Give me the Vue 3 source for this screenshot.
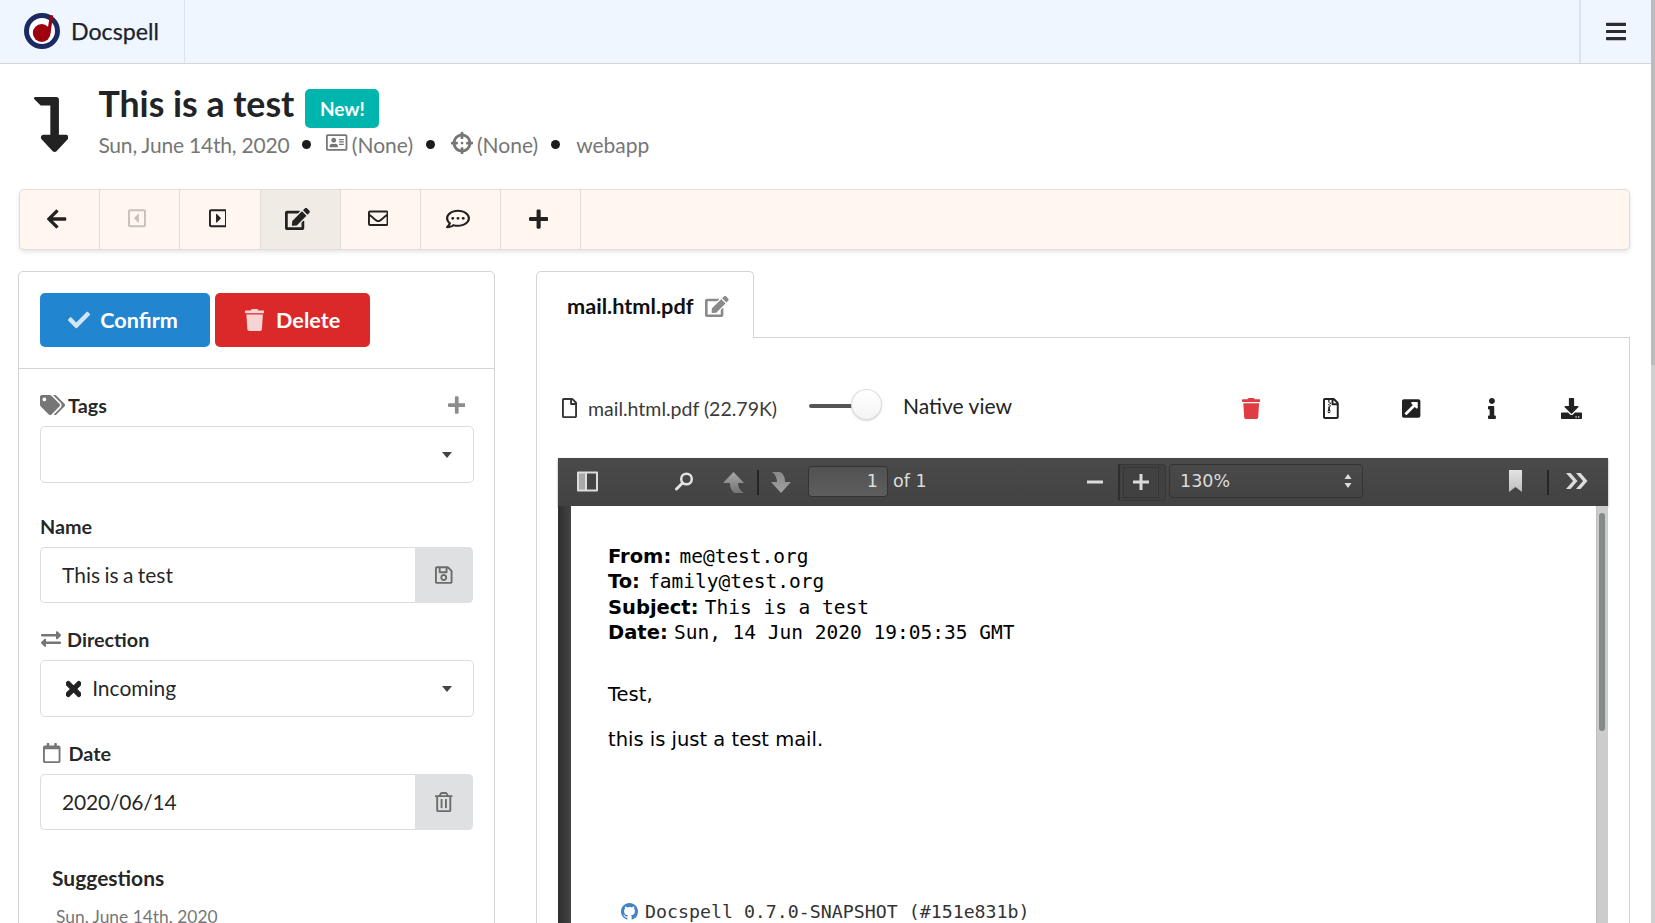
<script setup>
import { h } from 'vue'

const paths = {
  levelDown: [320, 'M313.553 392.331L209.587 504.334c-9.485 10.214-25.676 10.229-35.174 0L70.438 392.331C56.232 377.031 67.062 352 88.025 352H152V80H68.024a11.996 11.996 0 0 1-8.485-3.515l-56-56C-4.021 12.926 1.333 0 12.024 0H208c13.255 0 24 10.745 24 24v328h63.966c20.878 0 31.851 24.969 17.587 40.331z'],
  arrowLeft: [448, 'M257.5 445.1l-22.2 22.2c-9.4 9.4-24.6 9.4-33.9 0L7 273c-9.4-9.4-9.4-24.6 0-33.9L201.4 44.7c9.4-9.4 24.6-9.4 33.9 0l22.2 22.2c9.5 9.5 9.3 25-.4 34.3L136.6 216H424c13.3 0 24 10.7 24 24v32c0 13.3-10.7 24-24 24H136.6l120.5 114.8c9.8 9.3 10 24.8.4 34.3z'],
  plus: [448, 'M416 208H272V64c0-17.67-14.33-32-32-32h-32c-17.67 0-32 14.33-32 32v144H32c-17.67 0-32 14.33-32 32v32c0 17.67 14.33 32 32 32h144v144c0 17.67 14.33 32 32 32h32c17.67 0 32-14.33 32-32V304h144c17.67 0 32-14.33 32-32v-32c0-17.67-14.33-32-32-32z'],
  check: [512, 'M173.898 439.404l-166.4-166.4c-9.997-9.997-9.997-26.206 0-36.204l36.203-36.204c9.997-9.998 26.207-9.998 36.204 0L192 312.69 432.095 72.596c9.997-9.997 26.207-9.997 36.204 0l36.203 36.204c9.997 9.997 9.997 26.206 0 36.204l-294.4 294.401c-9.998 9.997-26.207 9.997-36.204-.001z'],
  trash: [448, 'M432 32H312l-9.4-18.7A24 24 0 0 0 281.1 0H166.8a23.72 23.72 0 0 0-21.4 13.3L136 32H16A16 16 0 0 0 0 48v32a16 16 0 0 0 16 16h416a16 16 0 0 0 16-16V48a16 16 0 0 0-16-16zM53.2 467a48 48 0 0 0 47.9 45h245.8a48 48 0 0 0 47.9-45L416 128H32z'],
  times: [352, 'M242.72 256l100.07-100.07c12.28-12.28 12.28-32.19 0-44.48l-22.24-22.24c-12.28-12.28-32.19-12.28-44.48 0L176 189.28 75.93 89.21c-12.28-12.28-32.19-12.28-44.48 0L9.21 111.45c-12.28 12.28-12.28 32.19 0 44.48L109.28 256 9.21 356.07c-12.28 12.28-12.28 32.19 0 44.48l22.24 22.24c12.28 12.28 32.2 12.28 44.48 0L176 322.72l100.07 100.07c12.28 12.28 32.2 12.28 44.48 0l22.24-22.24c12.28-12.28 12.28-32.19 0-44.48L242.72 256z'],
  bars: [448, 'M16 132h416c8.837 0 16-7.163 16-16V76c0-8.837-7.163-16-16-16H16C7.163 60 0 67.163 0 76v40c0 8.837 7.163 16 16 16zm0 160h416c8.837 0 16-7.163 16-16v-40c0-8.837-7.163-16-16-16H16c-8.837 0-16 7.163-16 16v40c0 8.837 7.163 16 16 16zm0 160h416c8.837 0 16-7.163 16-16v-40c0-8.837-7.163-16-16-16H16c-8.837 0-16 7.163-16 16v40c0 8.837 7.163 16 16 16z'],
  edit: [576, 'M402.6 83.2l90.2 90.2c3.8 3.8 3.8 10 0 13.8L274.4 405.6l-92.8 10.3c-12.4 1.4-22.9-9.1-21.5-21.5l10.3-92.8L388.8 83.2c3.8-3.8 10-3.8 13.8 0zm162-22.9l-48.8-48.8c-15.2-15.2-39.9-15.2-55.2 0l-35.4 35.4c-3.8 3.8-3.8 10 0 13.8l90.2 90.2c3.8 3.8 10 3.8 13.8 0l35.4-35.4c15.2-15.3 15.2-40 0-55.2zM384 346.2V448H64V128h229.8c3.2 0 6.2-1.3 8.5-3.5l40-40c7.6-7.6 2.2-20.5-8.5-20.5H48C21.5 64 0 85.5 0 112v352c0 26.5 21.5 48 48 48h352c26.5 0 48-21.5 48-48V306.2c0-10.7-12.9-16-20.5-8.5l-40 40c-2.2 2.3-3.5 5.3-3.5 8.5z'],
  envelope: [512, 'M464 64H48C21.49 64 0 85.49 0 112v288c0 26.51 21.49 48 48 48h416c26.51 0 48-21.49 48-48V112c0-26.51-21.49-48-48-48zm0 48v40.805c-22.422 18.259-58.168 46.651-134.587 106.49-16.841 13.247-50.201 45.072-73.413 44.701-23.208.375-56.579-31.459-73.413-44.701C106.18 199.465 70.425 171.067 48 152.805V112h416zM48 400V214.398c22.914 18.251 55.409 43.862 104.938 82.646 21.857 17.205 60.134 55.186 103.062 54.955 42.717.231 80.509-37.199 103.053-54.947 49.528-38.783 82.032-64.401 104.947-82.653V400H48z'],
  comment: [512, 'M144 208c-17.7 0-32 14.3-32 32s14.3 32 32 32 32-14.3 32-32-14.3-32-32-32zm112 0c-17.7 0-32 14.3-32 32s14.3 32 32 32 32-14.3 32-32-14.3-32-32-32zm112 0c-17.7 0-32 14.3-32 32s14.3 32 32 32 32-14.3 32-32-14.3-32-32-32zM256 32C114.6 32 0 125.1 0 240c0 47.6 19.9 91.2 52.9 126.3C38 405.7 7 439.1 6.5 439.5c-6.6 7-8.4 17.2-4.6 26S14.4 480 24 480c61.5 0 110-25.7 139.1-46.3C192 442.8 223.2 448 256 448c141.4 0 256-93.1 256-208S397.4 32 256 32zm0 368c-26.7 0-53.1-4.1-78.4-12.1l-22.7-7.2-19.5 13.8c-14.3 10.1-33.9 21.4-57.5 29 7.3-12.1 14.4-25.7 19.9-40.2l10.6-28.1-20.6-21.8C69.7 314.1 48 282.2 48 240c0-88.2 93.3-160 208-160s208 71.8 208 160-93.3 160-208 160z'],
  tags: [640, 'M497.941 225.941L286.059 14.059A48 48 0 0 0 252.118 0H48C21.49 0 0 21.49 0 48v204.118a48 48 0 0 0 14.059 33.941l211.882 211.882c18.744 18.745 49.136 18.746 67.882 0l204.118-204.118c18.745-18.745 18.745-49.137 0-67.882zM112 160c-26.51 0-48-21.49-48-48s21.49-48 48-48 48 21.49 48 48-21.49 48-48 48zm513.941 133.823L421.823 497.941c-18.745 18.745-49.137 18.745-67.882 0l-.36-.36L527.64 323.522c16.999-16.999 26.36-39.6 26.36-63.64s-9.362-46.641-26.36-63.64L331.397 0h48.721a48 48 0 0 1 33.941 14.059l211.882 211.882c18.745 18.745 18.745 49.137 0 67.882z'],
  exchange: [512, 'M0 168v-16c0-13.255 10.745-24 24-24h360V80c0-21.367 25.899-32.042 40.971-16.971l80 80c9.372 9.373 9.372 24.569 0 33.941l-80 80C409.956 271.982 384 261.456 384 240v-48H24c-13.255 0-24-10.745-24-24zm488 152H128v-48c0-21.314-25.862-32.08-40.971-16.971l-80 80c-9.372 9.373-9.372 24.569 0 33.941l80 80C102.057 463.997 128 453.437 128 432v-48h360c13.255 0 24-10.745 24-24v-16c0-13.255-10.745-24-24-24z'],
  calendar: [448, 'M400 64h-48V12c0-6.6-5.4-12-12-12h-40c-6.6 0-12 5.4-12 12v52H160V12c0-6.6-5.4-12-12-12h-40c-6.6 0-12 5.4-12 12v52H48C21.5 64 0 85.5 0 112v352c0 26.5 21.5 48 48 48h352c26.5 0 48-21.5 48-48V112c0-26.5-21.5-48-48-48zm-6 400H54c-3.3 0-6-2.7-6-6V160h352v298c0 3.3-2.7 6-6 6z'],
  save: [448, 'M433.941 129.941l-83.882-83.882A48 48 0 0 0 316.118 32H48C21.49 32 0 53.49 0 80v352c0 26.51 21.49 48 48 48h352c26.51 0 48-21.49 48-48V163.882a48 48 0 0 0-14.059-33.941zM272 80v80H144V80h128zm122 352H54a6 6 0 0 1-6-6V86a6 6 0 0 1 6-6h42v104c0 13.255 10.745 24 24 24h176c13.255 0 24-10.745 24-24V83.882l78.243 78.243a6 6 0 0 1 1.757 4.243V426a6 6 0 0 1-6 6zM224 232c-48.523 0-88 39.477-88 88s39.477 88 88 88 88-39.477 88-88-39.477-88-88-88zm0 128c-22.056 0-40-17.944-40-40s17.944-40 40-40 40 17.944 40 40-17.944 40-40 40z'],
  trashAlt: [448, 'M268 416h24a12 12 0 0 0 12-12V188a12 12 0 0 0-12-12h-24a12 12 0 0 0-12 12v216a12 12 0 0 0 12 12zM432 80h-82.41l-34-56.7A48 48 0 0 0 274.41 0H173.59a48 48 0 0 0-41.16 23.3L98.41 80H16A16 16 0 0 0 0 96v16a16 16 0 0 0 16 16h16v336a48 48 0 0 0 48 48h288a48 48 0 0 0 48-48V128h16a16 16 0 0 0 16-16V96a16 16 0 0 0-16-16zM171.84 50.91A6 6 0 0 1 177 48h94a6 6 0 0 1 5.15 2.91L293.61 80H154.39zM368 464H80V128h288zm-212-48h24a12 12 0 0 0 12-12V188a12 12 0 0 0-12-12h-24a12 12 0 0 0-12 12v216a12 12 0 0 0 12 12z'],
  file: [384, 'M369.9 97.9L286 14C277 5 264.8-.1 252.1-.1H48C21.5 0 0 21.5 0 48v416c0 26.5 21.5 48 48 48h288c26.5 0 48-21.5 48-48V131.9c0-12.7-5.1-25-14.1-34zM332.1 128H256V51.9l76.1 76.1zM48 464V48h160v104c0 13.3 10.7 24 24 24h104v288H48z'],
  fileZip: [384, 'M369.9 97.9L286 14C277 5 264.8-.1 252.1-.1H48C21.5 0 0 21.5 0 48v416c0 26.5 21.5 48 48 48h288c26.5 0 48-21.5 48-48V131.9c0-12.7-5.1-25-14.1-34zM332.1 128H256V51.9l76.1 76.1zM48 464V48h80v32h32V48h48v104c0 13.3 10.7 24 24 24h104v288H48zM128 80v32h32V80zm32 32v32h32v-32zm-32 32v32h32v-32zm32 32v32h32v-32zm-32 32v48l-14 72c-4 22 12 42 34 42s38-20 34-42l-14-72v-48zm19 108c12 0 21 6 21 14s-9 14-21 14-21-6-21-14 9-14 21-14z'],
  crosshairs: [512, 'M500 224h-30.364C455.724 130.325 381.675 56.276 288 42.364V12c0-6.627-5.373-12-12-12h-40c-6.627 0-12 5.373-12 12v30.364C130.325 56.276 56.276 130.325 42.364 224H12c-6.627 0-12 5.373-12 12v40c0 6.627 5.373 12 12 12h30.364C56.276 381.675 130.325 455.724 224 469.636V500c0 6.627 5.373 12 12 12h40c6.627 0 12-5.373 12-12v-30.364C381.675 455.724 455.724 381.675 469.636 288H500c6.627 0 12-5.373 12-12v-40c0-6.627-5.373-12-12-12zM288 404.634V364c0-6.627-5.373-12-12-12h-40c-6.627 0-12 5.373-12 12v40.634C165.826 392.232 119.783 346.243 107.366 288H148c6.627 0 12-5.373 12-12v-40c0-6.627-5.373-12-12-12h-40.634C119.768 165.826 165.757 119.783 224 107.366V148c0 6.627 5.373 12 12 12h40c6.627 0 12-5.373 12-12v-40.634C346.174 119.768 392.217 165.757 404.634 224H364c-6.627 0-12 5.373-12 12v40c0 6.627 5.373 12 12 12h40.634C392.232 346.174 346.243 392.217 288 404.634zM288 256c0 17.673-14.327 32-32 32s-32-14.327-32-32c0-17.673 14.327-32 32-32s32 14.327 32 32z'],
  card: [576, 'M528 32H48C21.5 32 0 53.5 0 80v352c0 26.5 21.5 48 48 48h480c26.5 0 48-21.5 48-48V80c0-26.5-21.5-48-48-48zm0 400H48V80h480v352zM208 256c35.3 0 64-28.7 64-64s-28.7-64-64-64-64 28.7-64 64 28.7 64 64 64zm-89.6 128h179.2c12.4 0 22.4-8.6 22.4-19.2v-19.2c0-31.8-30.1-57.6-67.2-57.6-10.8 0-18.7 8-44.8 8-26.9 0-33.4-8-44.8-8-37.1 0-67.2 25.8-67.2 57.6v19.2c0 10.6 10 19.2 22.4 19.2zM360 320h112c4.4 0 8-3.6 8-8v-16c0-4.4-3.6-8-8-8H360c-4.4 0-8 3.6-8 8v16c0 4.4 3.6 8 8 8zm0-64h112c4.4 0 8-3.6 8-8v-16c0-4.4-3.6-8-8-8H360c-4.4 0-8 3.6-8 8v16c0 4.4 3.6 8 8 8zm0-64h112c4.4 0 8-3.6 8-8v-16c0-4.4-3.6-8-8-8H360c-4.4 0-8 3.6-8 8v16c0 4.4 3.6 8 8 8z'],
  caretLeft: [448, 'M272 157.1v197.8c0 10.7-13 16.1-20.5 8.5l-98.3-98.9c-4.7-4.7-4.7-12.2 0-16.9l98.3-98.9c7.5-7.7 20.5-2.3 20.5 8.4zM448 80v352c0 26.5-21.5 48-48 48H48c-26.5 0-48-21.5-48-48V80c0-26.5 21.5-48 48-48h352c26.5 0 48 21.5 48 48zm-48 346V86c0-3.3-2.7-6-6-6H54c-3.3 0-6 2.7-6 6v340c0 3.3 2.7 6 6 6h340c3.3 0 6-2.7 6-6z'],
  caretRight: [448, 'M176 354.9V157.1c0-10.7 13-16.1 20.5-8.5l98.3 98.9c4.7 4.7 4.7 12.2 0 16.9l-98.3 98.9c-7.5 7.7-20.5 2.3-20.5-8.4zM448 80v352c0 26.5-21.5 48-48 48H48c-26.5 0-48-21.5-48-48V80c0-26.5 21.5-48 48-48h352c26.5 0 48 21.5 48 48zm-48 346V86c0-3.3-2.7-6-6-6H54c-3.3 0-6 2.7-6 6v340c0 3.3 2.7 6 6 6h340c3.3 0 6-2.7 6-6z'],
  external: [448, 'M448 80v352c0 26.51-21.49 48-48 48H48c-26.51 0-48-21.49-48-48V80c0-26.51 21.49-48 48-48h352c26.51 0 48 21.49 48 48zm-88 16H248.029c-21.313 0-32.08 25.861-16.971 40.971l31.984 31.987L67.515 364.485c-4.686 4.686-4.686 12.284 0 16.971l31.029 31.029c4.687 4.686 12.285 4.686 16.971 0l195.526-195.526 31.988 31.991C358.058 263.977 384 253.425 384 231.979V120c0-13.255-10.745-24-24-24z'],
  info: [192, 'M20 424.229h20V279.771H20c-11.046 0-20-8.954-20-20V212c0-11.046 8.954-20 20-20h112c11.046 0 20 8.954 20 20v212.229h20c11.046 0 20 8.954 20 20V492c0 11.046-8.954 20-20 20H20c-11.046 0-20-8.954-20-20v-47.771c0-11.046 8.954-20 20-20zM96 0C56.235 0 24 32.235 24 72s32.235 72 72 72 72-32.235 72-72S135.764 0 96 0z'],
  download: [512, 'M216 0h80c13.3 0 24 10.7 24 24v168h87.7c17.8 0 26.7 21.5 14.1 34.1L269.7 378.3c-7.5 7.5-19.8 7.5-27.3 0L90.1 226.1c-12.6-12.6-3.7-34.1 14.1-34.1H192V24c0-13.3 10.7-24 24-24zm296 376v112c0 13.3-10.7 24-24 24H24c-13.3 0-24-10.7-24-24V376c0-13.3 10.7-24 24-24h146.7l49 49c20.1 20.1 52.5 20.1 72.6 0l49-49H488c13.3 0 24 10.7 24 24zm-124 88c0-11-9-20-20-20s-20 9-20 20 9 20 20 20 20-9 20-20zm64 0c0-11-9-20-20-20s-20 9-20 20 9 20 20 20 20-9 20-20z']
}

const Ico = (props) => {
  const [w, d] = paths[props.n]
  return h('svg', { class: 'ico', viewBox: `0 0 ${w} 512`, 'aria-hidden': 'true' }, [h('path', { d, fill: 'currentColor' })])
}
Ico.props = ['n']

const menuItems = [
  { n: 'arrowLeft', size: 'big' },
  { n: 'caretLeft', disabled: true },
  { n: 'caretRight' },
  { n: 'edit', active: true, size: 'big' },
  { n: 'envelope' },
  { n: 'comment', size: 'wide' },
  { n: 'plus', size: 'big' }
]
</script>

<template>
  <div class="page">
    <header class="topbar">
      <div class="brand">
        <svg class="logo" viewBox="0 0 36 36">
          <circle cx="18" cy="18" r="15.500" fill="#fff" stroke="#1b2a62" stroke-width="5" />
          <circle cx="17.700" cy="20" r="8.900" fill="#9f0010" />
          <path d="M26 2 L29.200 2.600 L26.500 20 L23 20 Z" fill="#9f0010" />
        </svg>
        <span class="brand-name">Docspell</span>
      </div>
      <div class="burger"><Ico n="bars" class="i-bars" /></div>
    </header>

    <section class="title-row">
      <Ico n="levelDown" class="i-dir" />
      <div class="title-text">
        <div class="title-line">
          <h1>This is a test</h1>
          <span class="new">New!</span>
        </div>
        <div class="meta">
          <span class="date">Sun, June 14th, 2020</span>
          <i class="dot"></i>
          <span class="with-icon"><Ico n="card" class="i-meta-card" />(None)</span>
          <i class="dot"></i>
          <span class="with-icon"><Ico n="crosshairs" class="i-meta" />(None)</span>
          <i class="dot"></i>
          <span class="src">webapp</span>
        </div>
      </div>
    </section>

    <nav class="action-bar">
      <a
        v-for="m in menuItems"
        :key="m.n"
        class="act"
        :class="{ disabled: m.disabled, active: m.active }"
      ><Ico :n="m.n" class="i-act" :class="m.size" /></a>
    </nav>

    <main class="columns">
      <aside class="panel">
        <div class="panel-btns">
          <button class="btn blue"><Ico n="check" class="i-btn" />Confirm</button>
          <button class="btn red"><Ico n="trash" class="i-btn" />Delete</button>
        </div>
        <div class="panel-form">
          <div class="field tags-field">
            <label class="lbl lbl-split">
              <span class="lbl-main"><Ico n="tags" class="i-lbl i-tags" />Tags</span>
              <Ico n="plus" class="i-addtag" />
            </label>
            <div class="select empty"><i class="caret"></i></div>
          </div>
          <div class="field">
            <label class="lbl">Name</label>
            <div class="input-action">
              <span class="input-val words">This is a test</span>
              <span class="addon"><Ico n="save" class="i-addon" /></span>
            </div>
          </div>
          <div class="field">
            <label class="lbl"><Ico n="exchange" class="i-lbl" />Direction</label>
            <div class="select"><Ico n="times" class="i-x" /><span class="sel-val">Incoming</span><i class="caret"></i></div>
          </div>
          <div class="field">
            <label class="lbl"><Ico n="calendar" class="i-lbl i-cal" />Date</label>
            <div class="input-action">
              <span class="input-val digits">2020/06/14</span>
              <span class="addon"><Ico n="trashAlt" class="i-addon" /></span>
            </div>
          </div>
          <div class="suggest">
            <h4>Suggestions</h4>
            <div class="sug-item">Sun, June 14th, 2020</div>
          </div>
        </div>
      </aside>

      <section class="viewer">
        <div class="tabs">
          <div class="tab">mail.html.pdf<Ico n="edit" class="i-tab" /></div>
          <div class="tab-fill"></div>
        </div>
        <div class="tab-body">
          <div class="file-row">
            <div class="file-info">
              <span class="file-name"><Ico n="file" class="i-file" />mail.html.pdf (22.79K)</span>
              <span class="toggle"><i class="track"></i><i class="knob"></i></span>
              <span class="native">Native view</span>
            </div>
            <div class="file-actions">
              <a class="fa red-ico"><Ico n="trash" /></a>
              <a class="fa"><Ico n="fileZip" /></a>
              <a class="fa"><Ico n="external" /></a>
              <a class="fa"><Ico n="info" /></a>
              <a class="fa"><Ico n="download" /></a>
            </div>
          </div>

          <div class="pdf">
            <div class="pdf-bar">
              <div class="pdf-left">
                <svg class="pi sidebar" viewBox="0 0 21 21"><path d="M0 1.500a1 1 0 0 1 1-1h19a1 1 0 0 1 1 1v18a1 1 0 0 1-1 1H1a1 1 0 0 1-1-1z" fill="#dcdcdc" /><path d="M2 2.500h6v16H2z" fill="#a8a8a8" /><path d="M10 2.500h9v16h-9z" fill="#444" /></svg>
                <svg class="pi search" viewBox="0 0 19 19"><circle cx="11.500" cy="7" r="5.300" fill="none" stroke="#e2e2e2" stroke-width="2.500" /><path d="M7.500 11L1.500 17" stroke="#e2e2e2" stroke-width="3" stroke-linecap="round" /></svg>
                <svg class="pi up" viewBox="0 0 21 21"><defs><linearGradient id="gu" x1="0" y1="0" x2="0" y2="1"><stop offset="0" stop-color="#a8a8a8" /><stop offset="1" stop-color="#747474" /></linearGradient></defs><path d="M10.500 0L21 11h-6c0 4 2 8 6 10h-9c-4-2-5-6-5-10H0z" fill="url(#gu)" /></svg>
                <i class="pdf-sep sep-nav"></i>
                <svg class="pi down" viewBox="0 0 20 21"><defs><linearGradient id="gd" x1="0" y1="0" x2="0" y2="1"><stop offset="0" stop-color="#888" /><stop offset="1" stop-color="#a0a0a0" /></linearGradient></defs><path d="M10 21L0 10h6C6 6 4 2 1 0h8c4 2 5 6 5 10h6z" fill="url(#gd)" /></svg>
                <span class="page-input">1</span>
                <span class="page-of">of 1</span>
              </div>
              <div class="pdf-mid">
                <span class="zoom-btn"><svg class="pi zi" viewBox="0 0 16 16"><path d="M0 6.500h16v3H0z" fill="#dcdcdc" /></svg></span>
                <span class="zoom-btn focus"><span class="focus-ring"><svg class="pi zi" viewBox="0 0 16 16"><path d="M0 6.500h16v3H0z M6.500 0h3v16h-3z" fill="#dcdcdc" /></svg></span></span>
                <span class="zoom-sel">130%<svg class="updown" viewBox="0 0 8 16"><path d="M4 1l3.500 5h-7z M4 15l3.500-5h-7z" fill="#dcdcdc" /></svg></span>
              </div>
              <div class="pdf-right">
                <svg class="pi bookmark" viewBox="0 0 13 22"><defs><linearGradient id="gb" x1="0" y1="0" x2="0" y2="1"><stop offset="0" stop-color="#e4e4e4" /><stop offset="1" stop-color="#bdbdbd" /></linearGradient></defs><path d="M0 0h13v22l-6.500-5L0 22z" fill="url(#gb)" /></svg>
                <i class="pdf-sep sep-end"></i>
                <svg class="pi more" viewBox="0 0 22 16"><path d="M0 0h4.500l7 8-7 8H0l7-8z M10 0h4.500l7 8-7 8H10l7-8z" fill="#dcdcdc" /></svg>
              </div>
            </div>
            <div class="pdf-body">
              <div class="pdf-side"></div>
              <div class="pdf-doc">
                <div class="mail-head">
                  <div><b>From:</b> <span class="shift">me@test.org</span></div>
                  <div><b>To:</b> <span class="shift">family@test.org</span></div>
                  <div><b>Subject:</b> <span>This is a test</span></div>
                  <div><b>Date:</b> <span>Sun, 14 Jun 2020 19:05:35 GMT</span></div>
                </div>
                <p class="mail-p first">Test,</p>
                <p class="mail-p">this is just a test mail.</p>
                <div class="mail-foot">
                  <svg class="gh" viewBox="0 0 16 16"><path fill="#4183c4" d="M8 0C3.580 0 0 3.580 0 8c0 3.540 2.290 6.530 5.470 7.590.4.070.55-.17.55-.38 0-.19-.01-.82-.01-1.490-2.010.37-2.530-.49-2.690-.94-.09-.23-.48-.94-.82-1.130-.28-.15-.68-.52-.01-.53.63-.01 1.080.58 1.230.82.72 1.210 1.870.87 2.330.66.07-.52.28-.87.51-1.070-1.780-.2-3.640-.89-3.640-3.950 0-.87.31-1.590.82-2.150-.08-.2-.36-1.020.08-2.120 0 0 .67-.21 2.200.82.64-.18 1.320-.27 2-.27.68 0 1.360.09 2 .27 1.530-1.040 2.200-.82 2.200-.82.44 1.100.16 1.920.08 2.120.51.56.82 1.270.82 2.150 0 3.070-1.870 3.750-3.650 3.950.29.25.54.73.54 1.480 0 1.070-.01 1.930-.01 2.200 0 .21.15.46.55.38A8.013 8.013 0 0016 8c0-4.420-3.580-8-8-8z" /></svg>
                  <span>Docspell 0.7.0-SNAPSHOT (#151e831b)</span>
                </div>
              </div>
              <div class="pdf-scroll"><i></i></div>
            </div>
          </div>
        </div>
      </section>
    </main>
    <div class="page-scroll"><i></i></div>
  </div>
</template>

<style>
html, body { margin: 0; padding: 0; height: 100%; overflow: hidden; background: #fff; }
</style>

<style scoped>
.page {
  position: relative;
  height: 923px;
  overflow: hidden;
  box-sizing: border-box;
  font-family: Lato, "Liberation Sans", sans-serif;
  font-size: 21px;
  color: rgba(0, 0, 0, 0.87);
  background: #fff;
}
.ico { display: inline-block; height: 1em; width: auto; flex: none; }

.topbar {
  height: 63px;
  box-sizing: content-box;
  background: #eff6ff;
  border-bottom: 1px solid #d4d6d9;
  display: flex;
  justify-content: space-between;
}
.brand {
  display: flex;
  align-items: center;
  width: 185px;
  box-sizing: border-box;
  padding-left: 24px;
  border-right: 1px solid #dde3ea;
}
.logo { width: 36px; height: 36px; margin-right: 11px; margin-top: -1px; }
.brand-name { font-size: 23.200px; font-weight: 400; color: #1d222b; -webkit-text-stroke: 0.25px #1d222b; padding-bottom: 2px; }
.burger {
  width: 72px;
  margin-right: 4px;
  border-left: 2px solid #dde3ea;
  box-sizing: border-box;
  display: flex;
  align-items: center;
  justify-content: center;
  color: #2c2c2c;
}
.i-bars { height: 23px; }

.title-row {
  display: flex;
  height: 125px;
  padding-left: 34px;
  box-sizing: border-box;
  padding-top: 17px;
}
.i-dir { height: 55px; margin-top: 16px; color: #222; }
.title-text { margin-left: 30px; }
.title-line { display: flex; align-items: center; height: 46px; }
h1 { margin: 0; font-size: 35.700px; font-weight: 700; color: #212326; line-height: 46px; }
.new {
  margin-left: 11px;
  margin-top: 9px;
  background: #00b5ad;
  color: #fff;
  font-weight: 700;
  font-size: 19px;
  border-radius: 5px;
  width: 74px;
  height: 39px;
  display: flex;
  align-items: center;
  justify-content: center;
}
.meta { display: flex; align-items: center; color: #767676; margin-top: 2px; height: 30px; }
.date { letter-spacing: -0.2px; }
.dot { width: 9px; height: 9px; background: #1b1c1d; border-radius: 50%; margin: 0 14px 0 13px; }
.with-icon { display: flex; align-items: center; }
.i-meta-card { height: 19px; margin-right: 4px; margin-top: -3px; margin-left: 1px; }
.i-meta { height: 22px; margin-right: 4px; margin-top: -3px; margin-left: 2px; }
.src { margin-left: 2px; }

.action-bar {
  margin: 0 25px 0 19px;
  height: 61px;
  box-sizing: border-box;
  background: #fff6f0;
  border: 1px solid #e5dcd6;
  border-radius: 5px;
  box-shadow: 0 2px 4px rgba(34, 36, 38, 0.12);
  display: flex;
}
.act {
  width: 80.200px;
  box-sizing: border-box;
  padding: 0 5px 2px 0;
  border-right: 1.500px solid #e3dad4;
  display: flex;
  align-items: center;
  justify-content: center;
  color: #222;
}
.act.disabled { color: #c6c1bd; }
.act.active { background: #f1ebe6; }
.i-act { height: 20.500px; }
.i-act.big { height: 22px; }
.i-act.wide { height: 24px; transform: scaleY(0.87); }

.columns {
  display: grid;
  grid-template-columns: 477px 1094px;
  column-gap: 41px;
  margin: 21px 0 0 18px;
}
.panel {
  border: 1px solid #d4d4d5;
  border-radius: 5px;
  background: #fff;
  height: 700px;
  box-sizing: border-box;
}
.panel-btns {
  padding: 21px;
  display: flex;
  gap: 5px;
  border-bottom: 1px solid #d4d4d5;
}
.btn {
  border: 0;
  border-radius: 5px;
  color: #fff;
  font-family: inherit;
  font-size: 21.600px;
  font-weight: 700;
  height: 54px;
  display: flex;
  align-items: center;
  justify-content: center;
  padding: 0 0 1px;
}
.blue { background: #2185d0; width: 170px; padding-right: 4px; }
.red { background: #db2828; width: 155px; }
.i-btn { height: 22px; margin-right: 10px; opacity: 0.8; }
.red .i-btn { margin-right: 12px; }

.panel-form { padding: 25px 20px 0 21px; }
.field { margin-bottom: 25px; }
.tags-field { margin-bottom: 32px; }
.lbl {
  display: flex;
  align-items: center;
  font-size: 19.800px;
  font-weight: 700;
  color: rgba(0, 0, 0, 0.87);
  height: 23px;
  box-sizing: border-box;
  padding-bottom: 2px;
  margin-bottom: 9px;
}
.lbl-split { justify-content: space-between; }
.lbl-main { display: flex; align-items: center; }
.i-lbl { height: 20px; color: #767676; margin-right: 6px; margin-left: 1px; }
.i-tags { margin-left: 0; margin-right: 3px; }
.i-cal { margin-left: 3px; margin-right: 8px; }
.i-addtag { height: 20px; color: #8c8c8c; margin-right: 9px; }

.select {
  height: 57px;
  box-sizing: border-box;
  border: 1px solid #dcdcdd;
  border-radius: 5px;
  display: flex;
  align-items: center;
  position: relative;
  padding-left: 25px;
}
.sel-val { padding-bottom: 2px; }
.caret {
  position: absolute;
  right: 21px;
  top: 50%;
  margin-top: -3px;
  border-left: 5.500px solid transparent;
  border-right: 5.500px solid transparent;
  border-top: 6px solid #444;
}
.i-x { height: 22px; color: #222; margin-right: 11px; stroke: currentColor; stroke-width: 30px; }

.input-action {
  height: 56px;
  box-sizing: border-box;
  border: 1px solid #dcdcdd;
  border-right: 0;
  border-radius: 5px;
  display: flex;
  align-items: center;
  justify-content: space-between;
  padding-left: 21px;
  width: 433px;
}
.input-val { padding-bottom: 2px; }
.words { word-spacing: -1px; }
.digits { letter-spacing: -0.2px; }
.addon {
  width: 58px;
  height: 56px;
  margin-top: -1px;
  margin-bottom: -1px;
  background: #dfe0e1;
  border-radius: 0 5px 5px 0;
  display: flex;
  align-items: center;
  justify-content: center;
  color: #6b6b6b;
}
.i-addon { height: 20px; }

.suggest { margin: 35px 0 0 12px; }
h4 { margin: 0; font-size: 21px; font-weight: 700; line-height: 26px; }
.sug-item { margin: 15px 0 0 4px; font-size: 17.400px; color: #767676; }

.tabs { display: flex; height: 67px; }
.tab {
  width: 218px;
  box-sizing: border-box;
  border: 1px solid #d4d4d5;
  border-bottom: 0;
  border-radius: 5px 5px 0 0;
  display: flex;
  align-items: center;
  padding-left: 30px;
  padding-top: 2px;
  font-size: 21.700px;
  font-weight: 700;
  color: #111;
  background: #fff;
}
.tab-fill { flex: 1; border-bottom: 1px solid #d4d4d5; }
.i-tab { height: 21px; margin-left: 12px; color: #8a8a8a; }
.tab-body {
  border: 1px solid #d4d4d5;
  border-top: 0;
  padding: 0 21px;
  height: 600px;
}
.file-row {
  height: 120px;
  display: flex;
  align-items: center;
  justify-content: space-between;
  padding-top: 16px;
  box-sizing: border-box;
}
.file-info { display: flex; align-items: center; margin-top: -2px; }
.file-name { display: flex; align-items: center; font-size: 19.500px; color: #3a3a3a; margin-top: 6px; }
.i-file { height: 20px; margin-right: 11px; margin-left: 4px; color: #333; }
.toggle { position: relative; width: 74px; height: 34px; margin-left: 32px; display: block; }
.track { position: absolute; left: 0; top: 16px; width: 50px; height: 3.500px; background: #555; border-radius: 2px; }
.knob {
  position: absolute;
  left: 42px;
  top: 1px;
  width: 31px;
  height: 31px;
  border-radius: 50%;
  background: linear-gradient(#fff, #f4f4f4);
  box-shadow: 0 1px 2px rgba(34, 36, 38, 0.15), 0 0 0 1px rgba(34, 36, 38, 0.15) inset;
}
.native { margin-left: 20px; color: #222; }
.file-actions { display: flex; gap: 0; margin-top: 4px; margin-right: -4px; }
.fa { width: 80.200px; display: flex; justify-content: center; font-size: 21px; color: #222; }
.red-ico { color: #e03c42; }

.pdf { width: 1050px; }
.pdf-bar {
  height: 48px;
  background: linear-gradient(#4a4a4a, #424242);
  box-shadow: 0 1px 2px rgba(0, 0, 0, 0.4);
  position: relative;
  display: flex;
  align-items: center;
  color: #dcdcdc;
  font-family: "DejaVu Sans", sans-serif;
}
.pi { display: block; }
.pdf-left { display: flex; align-items: center; width: 515px; padding-left: 19px; box-sizing: border-box; flex: none; }
.sidebar { width: 21px; height: 21px; margin-top: -2px; }
.search { width: 19px; height: 19px; margin-left: 77px; margin-top: -2px; }
.up { width: 21px; height: 21px; margin-left: 29px; }
.pdf-sep { width: 2px; height: 25px; background: #252525; display: block; }
.sep-nav { margin: 0 12px 0 13px; }
.down { width: 20px; height: 21px; }
.page-input {
  margin-left: 17px;
  width: 80px;
  height: 31px;
  box-sizing: border-box;
  background: linear-gradient(#525252, #5e5e5e);
  border: 1px solid #333;
  border-radius: 4px;
  text-align: right;
  padding-right: 9px;
  font-size: 17.500px;
  line-height: 28px;
  margin-top: -2px;
}
.page-of { margin-left: 5px; font-size: 17.500px; margin-top: -3px; }
.pdf-mid { display: flex; align-items: center; }
.zoom-btn { width: 44px; height: 37px; display: flex; align-items: center; justify-content: center; }
.zoom-btn.focus {
  width: 48px;
  box-sizing: border-box;
  border: 1px solid #383838;
  border-radius: 0 4px 4px 0;
  border-left: 2px solid #2e2e2e;
  background: #414141;
  margin-left: 1px;
  margin-right: 3px;
  padding-right: 3px;
}
.focus-ring {
  width: 34px;
  height: 29px;
  border: 1px dotted #2c2c2c;
  display: flex;
  align-items: center;
  justify-content: center;
  flex: none;
}
.zi { width: 16px; height: 16px; margin-top: -1px; }
.zoom-sel {
  width: 194px;
  height: 34px;
  box-sizing: border-box;
  border: 1px solid #333;
  border-radius: 4px;
  padding-left: 10px;
  font-size: 17.500px;
  display: flex;
  align-items: center;
  justify-content: space-between;
  margin-top: -2px;
}
.updown { width: 8px; height: 16px; margin-right: 10px; }
.pdf-right { display: flex; align-items: center; margin-left: auto; padding-right: 20px; }
.bookmark { width: 13px; height: 22px; margin-top: -2px; }
.sep-end { margin: 0 17px 0 25px; }
.more { width: 22px; height: 16px; margin-top: -2px; }

.pdf-body { display: flex; height: 420px; position: relative; }
.pdf-side { width: 13px; background: linear-gradient(90deg, #2e2e2e, #444); }
.pdf-doc { flex: 1; padding: 38px 0 0 37px; background: #fff; color: #000; font-family: "DejaVu Sans", sans-serif; position: relative; }
.mail-head { font-size: 19.500px; line-height: 25.300px; }
.mail-head span { font-family: "DejaVu Sans Mono", monospace; }
.mail-head .shift { margin-left: 2px; }
.mail-head b { font-weight: 700; }
.mail-p { font-size: 19.500px; margin: 0; line-height: 25px; margin-top: 20px; }
.mail-p.first { margin-top: 37px; }
.mail-foot { position: absolute; left: 50px; top: 395px; display: flex; align-items: center; font-family: "DejaVu Sans Mono", monospace; font-size: 18.250px; color: #333; }
.gh { width: 17px; height: 17px; margin-right: 7px; }
.pdf-scroll { width: 12px; background: #ccc; position: relative; border-left: 1px solid #bdbdbd; box-sizing: border-box; }
.pdf-scroll i { position: absolute; left: 2px; top: 7px; width: 6px; height: 218px; background: #868a8a; border-radius: 3px; display: block; }
.page-scroll { position: absolute; right: 0; top: 0; width: 4px; height: 923px; background: #d0d0d0; }
.page-scroll i { display: block; height: 365px; background: #bcbcbc; }
</style>
